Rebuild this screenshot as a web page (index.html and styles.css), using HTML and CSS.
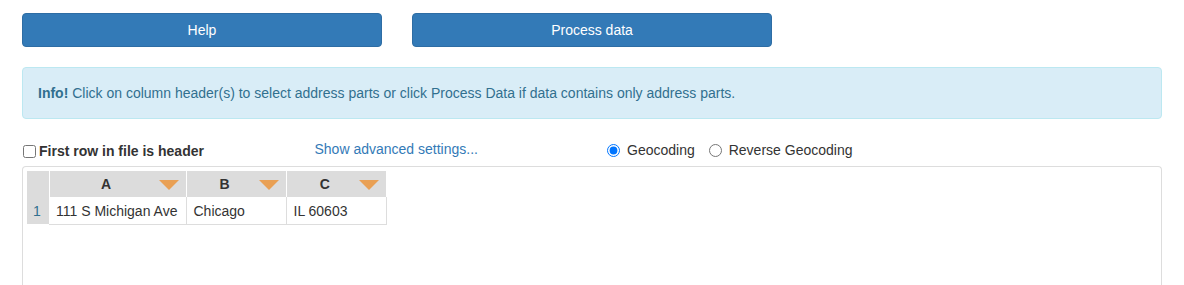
FILE: index.html
```html
<!DOCTYPE html>
<html lang="en">
<head>
    <meta charset="UTF-8">
    <meta name="viewport" content="width=device-width, initial-scale=1.0">
    <title>Geocoding</title>
    <link rel="stylesheet" href="styles.css">
</head>
<body>
    <div class="container">
        <div class="buttons">
            <button class="btn">Help</button>
            <button class="btn">Process data</button>
        </div>

        <div class="alert">
            <b>Info!</b> Click on column header(s) to select address parts or click Process Data if data contains only address parts.
        </div>

        <div class="options">
            <label class="check"><input type="checkbox"> First row in file is header</label>
            <a class="link" href="#">Show advanced settings...</a>
            <div class="radios">
                <label><input type="radio" name="mode" checked> Geocoding</label>
                <label><input type="radio" name="mode"> Reverse Geocoding</label>
            </div>
        </div>

        <div class="sheet">
            <table class="grid">
                <tr>
                    <th class="corner"></th>
                    <th class="colA"><div class="head"><span>A</span><i class="arrow"></i></div></th>
                    <th class="colB"><div class="head"><span>B</span><i class="arrow"></i></div></th>
                    <th class="colC"><div class="head"><span>C</span><i class="arrow"></i></div></th>
                </tr>
                <tr>
                    <td class="num">1</td>
                    <td>111 S Michigan Ave</td>
                    <td>Chicago</td>
                    <td>IL 60603</td>
                </tr>
            </table>
        </div>
    </div>
</body>
</html>
```

FILE: styles.css
```css
*{
    margin: 0;
    padding: 0;
    box-sizing: border-box;
}
body{
    font-family: "Liberation Sans", Arial, sans-serif;
    font-size: 14px;
    line-height: 20px;
    color: #333;
    background: #fff;
}
.container{
    max-width: 1170px;
    margin: 0 auto;
    padding: 13px 15px 0;
}
.buttons{
    display: grid;
    grid-template-columns: repeat(3, 1fr);
    column-gap: 30px;
}
.btn{
    height: 34px;
    border: 1px solid #2e6da4;
    border-radius: 4px;
    background-color: #337ab7;
    color: #fff;
    font-family: inherit;
    font-size: 14px;
}
.alert{
    margin-top: 20px;
    padding: 15px;
    border: 1px solid #bce8f1;
    border-radius: 4px;
    background-color: #d9edf7;
    color: #31708f;
}
.options{
    display: grid;
    grid-template-columns: repeat(4, 1fr);
    column-gap: 30px;
    margin-top: 21px;
    height: 26px;
}
.check{
    display: flex;
    align-items: center;
    gap: 3px;
    font-weight: bold;
    height: 20px;
    margin-top: 1px;
}
.check input{
    width: 13px;
    height: 13px;
    margin-left: 1px;
}
.link{
    color: #337ab7;
    text-decoration: none;
    height: 20px;
    margin-top: -1px;
}
.radios{
    grid-column: span 2;
    display: flex;
    gap: 14px;
    height: 20px;
}
.radios label{
    display: flex;
    align-items: center;
    gap: 7px;
}
.radios input{
    width: 13px;
    height: 13px;
}
.sheet{
    border: 1px solid #ddd;
    border-bottom: none;
    border-radius: 4px 4px 0 0;
    padding: 4px;
    height: 140px;
}
.grid{
    border-collapse: collapse;
    border-spacing: 0;
}
.grid th{
    height: 26px;
    background-color: #dcdcdc;
    border-right: 1px solid #fff;
    padding: 0;
    font-weight: bold;
}
.grid th.corner{
    width: 22px;
}
.colA{ width: 137px; }
.colB{ width: 100px; }
.colC{ width: 100px; }
.grid th:last-child{
    border-right: none;
}
.head{
    display: flex;
    align-items: center;
    padding-left: 4px;
}
.head span{
    flex: 1;
    text-align: center;
}
.arrow{
    width: 0;
    height: 0;
    border-left: 10px solid transparent;
    border-right: 10px solid transparent;
    border-top: 10px solid #e9a054;
    margin: 1px 7px 0 0;
}
.grid td{
    height: 27px;
    padding: 1px 7px 0;
    border-right: 1px solid #ddd;
    border-bottom: 1px solid #ddd;
    white-space: nowrap;
}
.grid td.num{
    background-color: #dcdcdc;
    border: none;
    text-align: center;
    color: #31708f;
    padding: 1px 2px 0 0;
}
```
